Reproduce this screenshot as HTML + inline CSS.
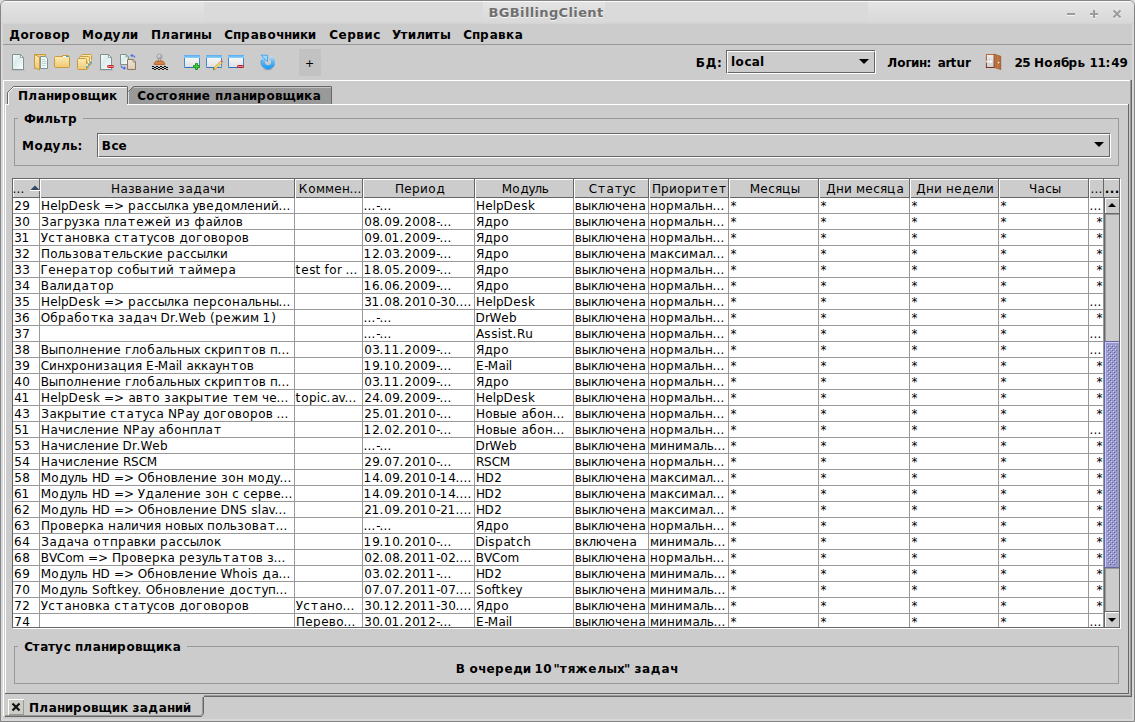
<!DOCTYPE html>
<html><head><meta charset="utf-8"><title>BGBillingClient</title>
<style>
html,body{margin:0;padding:0}
body{width:1135px;height:722px;background:#ccc;position:relative;overflow:hidden;
 font-family:"DejaVu Sans","Liberation Sans",sans-serif;font-size:12px;color:#000}
div,span,svg{position:absolute;box-sizing:border-box}
.t{line-height:16px;white-space:pre;font-weight:normal}
.b{font-weight:bold}
#tx text{font-size:12px;fill:#000;white-space:pre}
#tx{pointer-events:none}
.l{background:#999}.d{background:#666}.w{background:#fff}
/* window frame */
#win{left:0;top:0;width:1135px;height:722px;border:1px solid #858585;border-radius:6px 6px 0 0;box-shadow:inset 0 0 0 2px #d8d8d8}
#titlebar{left:1px;top:1px;width:1133px;height:23px;border-radius:5px 5px 0 0;overflow:hidden;background:linear-gradient(#fbfbfb 0,#fbfbfb 1px,#dadada 1px,#dadada 20px,#d7d7d7 21px,#d2d2d2 23px)}
#titlebar i{position:absolute;top:1px;height:22px;background:linear-gradient(#e4e4e4 0,#dcdcdc 14px,#d9d9d9 20px,#d3d3d3 22px)}
#cornerL,#cornerR{top:0;width:5px;height:5px;background:#dcdcdc}
/* combos */
.cd{border:1px solid #666}.cw{border:1px solid #fff}.cp{width:1px;height:1px;background:#ccc}
/* etched */
.et{border:1px solid #999}
.gap{background:#ccc;height:3px}
/* table */
#tbl{left:13px;top:198px;width:1091px;height:429px;background:#fff;
 background-image:repeating-linear-gradient(to bottom,transparent 0,transparent 15px,#999 15px,#999 16px)}
.gv{top:198px;width:1px;height:429px;background:#999}
#hdr{left:13px;top:179px;width:1106px;height:19px;background:#ccc;border-top:1px solid #fff;border-bottom:1px solid #666}
.hv{top:179px;width:2px;height:19px;background:linear-gradient(to right,#666 0,#666 1px,#fff 1px,#fff 2px)}
</style></head><body>
<div id="cornerL" style="left:0"></div><div id="cornerR" style="left:1130px"></div><div id="win"></div>
<div id="titlebar"><i style="left:0;width:203px"></i><i style="left:482px;width:122px"></i><i style="left:867px;width:266px"></i></div>
<!-- window buttons -->
<svg style="left:1060px;top:6px" width="70" height="16" viewBox="0 0 70 16" shape-rendering="crispEdges">
<g fill="#f2f2f2"><rect x="7" y="8" width="8" height="2"/><rect x="30" y="8" width="8" height="2"/><rect x="33" y="5" width="2" height="8"/></g>
<g fill="#9c9c9c"><rect x="7" y="7" width="8" height="2"/><rect x="30" y="7" width="8" height="2"/><rect x="33" y="4" width="2" height="8"/></g>
<g shape-rendering="auto" stroke-width="2" fill="none"><path d="M53.5 5.5l7 7M60.5 5.5l-7 7" stroke="#f2f2f2"/><path d="M53.5 4.5l7 7M60.5 4.5l-7 7" stroke="#9c9c9c"/></g>
</svg>
<!-- menu bar line -->
<div class="l" style="left:3px;top:44px;width:1129px;height:1px"></div>
<svg style="left:8px;top:50px" width="272" height="24" viewBox="8 50 272 24">
<defs>
<linearGradient id="gd" x1="0" y1="0" x2="1" y2="1"><stop offset="0" stop-color="#fff"/><stop offset=".4" stop-color="#dcebeb"/><stop offset="1" stop-color="#fff"/></linearGradient>
<linearGradient id="gf" x1="0" y1="0" x2="0" y2="1"><stop offset="0" stop-color="#fcebb6"/><stop offset="1" stop-color="#edc873"/></linearGradient>
<linearGradient id="gw" x1="0" y1="0" x2="0" y2="1"><stop offset="0" stop-color="#fff"/><stop offset="1" stop-color="#dedede"/></linearGradient>
<linearGradient id="gb" x1="0" y1="0" x2="0" y2="1"><stop offset="0" stop-color="#55aaf1"/><stop offset="1" stop-color="#8fd2fb"/></linearGradient>
<linearGradient id="gr" x1="0" y1="0" x2="0" y2="1"><stop offset="0" stop-color="#cfe6f8"/><stop offset=".45" stop-color="#62b6f3"/><stop offset="1" stop-color="#149af2"/></linearGradient>
<linearGradient id="gk" x1="0" y1="0" x2="1" y2="1"><stop offset="0" stop-color="#fff"/><stop offset="1" stop-color="#8a8a8a"/></linearGradient>
<linearGradient id="gbe" x1="0" y1="0" x2="0" y2="1"><stop offset="0" stop-color="#efe6d8"/><stop offset="1" stop-color="#dccbb4"/></linearGradient>
</defs>
<!-- 1 new doc -->
<rect x="11" y="69.6" width="14" height="1" fill="#000" opacity=".12"/>
<path d="M12.5 54.5H20.5L23.5 57.5V69.5H12.5z" fill="url(#gd)" stroke="#7f9292"/>
<path d="M20.5 54.5V57.5H23.5z" fill="#fff" stroke="#7f9292" stroke-width=".8"/>
<!-- 2 open folder w doc -->
<rect x="33" y="68.2" width="3" height="1" fill="#000" opacity=".12"/>
<path d="M34.5 54.5H45.5V67.5H34.5z" fill="#f2d387" stroke="#c9983a"/>
<path d="M40.5 56.5H45.5L47.5 58.5V68.5H40.5z" fill="#eef6f6" stroke="#7f9292"/>
<path d="M42 59.5h3M42 61.5h4.5M42 63.5h4.5M42 65.5h3" stroke="#c3d0d0" stroke-width="1"/>
<path d="M34.5 54.5L39.5 57V70L34.5 67.5z" fill="url(#gf)" stroke="#c9983a" stroke-linejoin="round"/>
<!-- 3 folder -->
<path d="M61.5 57L62.5 55.5H68.5L69.5 57" fill="#f3d68c" stroke="#c89b3e"/>
<rect x="54.5" y="56.5" width="15" height="11" rx="1" fill="url(#gf)" stroke="#c89b3e"/>
<rect x="63" y="56" width="3" height="1" fill="#fff"/><rect x="66" y="56" width="2.5" height="1" fill="#1ea6f2"/>
<!-- 4 folder stack -->
<rect x="81.5" y="54.5" width="10" height="10" rx="1" fill="url(#gf)" stroke="#c89b3e"/>
<rect x="79.5" y="56.5" width="10" height="10" rx="1" fill="url(#gf)" stroke="#c89b3e"/>
<rect x="77.5" y="58.5" width="9" height="11" rx="1" fill="url(#gf)" stroke="#c89b3e"/>
<path d="M86.5 63.5l1.5-1.500V69l-1.500 .5z" fill="#f0cf7c" stroke="#c89b3e" stroke-width=".8"/>
<g><rect x="90" y="59.500" width="1.200" height="2" fill="#fff"/><rect x="90" y="61.500" width="1.200" height="2" fill="#1ea6f2"/>
<rect x="88.200" y="61.500" width="1.200" height="2" fill="#fff"/><rect x="88.200" y="63.500" width="1.200" height="2" fill="#1ea6f2"/>
<rect x="86.300" y="64" width="1.200" height="2" fill="#fff"/><rect x="86.300" y="66" width="1.200" height="2" fill="#1ea6f2"/></g>
<!-- 5 doc minus -->
<rect x="99" y="69.600" width="14" height="1" fill="#000" opacity=".12"/>
<path d="M100.500 54.500H108.500L111.500 57.500V69.500H100.500z" fill="url(#gd)" stroke="#7f9292"/>
<path d="M108.500 54.500V57.500H111.500z" fill="#fff" stroke="#7f9292" stroke-width=".8"/>
<rect x="107.500" y="65.500" width="6" height="2" rx=".8" fill="#f08a8a" stroke="#c41a26"/>
<!-- 6 two docs arrows -->
<path d="M120.500 54.500H126L128.500 57V64.500H120.500z" fill="url(#gd)" stroke="#7f9292"/>
<path d="M126 54.500V57H128.500z" fill="#fff" stroke="#7f9292" stroke-width=".8"/>
<path d="M127.500 59.500H133L135.500 62V69.500H127.500z" fill="url(#gbe)" stroke="#8d7761"/>
<path d="M133 59.500V62H135.500z" fill="#fff" stroke="#8d7761" stroke-width=".8"/>
<path d="M135 57.500C134.500 55.800 133 55.300 131 55.600" fill="none" stroke="#4a70ea" stroke-width="1.100"/><path d="M132.300 53.800L130.200 55.700L132.600 57.300z" fill="#3d66e8"/>
<path d="M121 65.500C121.300 67.500 122.800 68.300 124.500 68.200" fill="none" stroke="#4a70ea" stroke-width="1.100"/><path d="M123.800 66.300L126 68.200L123.700 70z" fill="#3d66e8"/>
<!-- stamp -->
<circle cx="159.500" cy="56.500" r="2.500" fill="url(#gk)" stroke="#8e8e8e" stroke-width=".8"/>
<rect x="158.500" y="58.500" width="2" height="4" fill="#c9c9c9" stroke="#909090" stroke-width=".6"/>
<path d="M154.300 64.600V63.200L156.300 61H162.700L164.700 63.200V64.600z" fill="#d58449" stroke="#ad5e2a" stroke-width=".9"/>
<path d="M152 66.500h16" stroke="#000" stroke-dasharray="2 2"/><path d="M152 67.500h16" stroke="#000" stroke-dasharray="2 2" stroke-dashoffset="2"/>
<path d="M152 68.500h16" stroke="#000" stroke-dasharray="2 2"/><path d="M152 69.500h16" stroke="#000" stroke-dasharray="2 2" stroke-dashoffset="2" opacity=".85"/>
<!-- window add -->
<g><rect x="184.500" y="55.500" width="15" height="12" rx="1" fill="url(#gw)" stroke="#3f88d8"/><path d="M184.500 67.500h15" stroke="#2f72bd"/><path d="M184 58V56a1 1 0 0 1 1-1h14a1 1 0 0 1 1 1v2z" fill="url(#gb)"/></g>
<path d="M195.500 63.500h2v2h2v2h-2v2h-2v-2h-2v-2h2z" fill="#3fcf3f" stroke="#1d8e1d" stroke-width=".9"/>
<!-- window edit -->
<g transform="translate(22 0)"><rect x="184.500" y="55.500" width="15" height="12" rx="1" fill="url(#gw)" stroke="#3f88d8"/><path d="M184.500 67.500h15" stroke="#2f72bd"/><path d="M184 58V56a1 1 0 0 1 1-1h14a1 1 0 0 1 1 1v2z" fill="url(#gb)"/></g>
<path d="M213.300 69.600L214.100 67.500L220.500 61.200L222 62.700L215.600 69z" fill="#f4dc58" stroke="#9b8420" stroke-width=".5"/>
<path d="M220.500 61.200L221.500 60.200L223 61.700L222 62.700z" fill="#ee4b5a"/><path d="M213.300 69.600L213.700 68.300L214.700 69.200z" fill="#000"/>
<path d="M219.800 61.900l1.500 1.500" stroke="#f2f2f2" stroke-width=".8"/>
<!-- window del -->
<g transform="translate(44 0)"><rect x="184.500" y="55.500" width="15" height="12" rx="1" fill="url(#gw)" stroke="#3f88d8"/><path d="M184.500 67.500h15" stroke="#2f72bd"/><path d="M184 58V56a1 1 0 0 1 1-1h14a1 1 0 0 1 1 1v2z" fill="url(#gb)"/></g>
<rect x="237.500" y="65.500" width="6" height="2" rx=".8" fill="#f08a8a" stroke="#b01822"/>
<!-- refresh -->
<ellipse cx="268" cy="69.500" rx="5" ry=".7" fill="#000" opacity=".12"/>
<path d="M270.390 55.420A7 7 0 1 1 263.990 56.270L266.220 59.460A3.100 3.100 0 1 0 269.060 59.090z" fill="url(#gr)"/>
<path d="M261.300 60A7 7 0 0 0 274.600 64.500" fill="none" stroke="#1f80da" stroke-width=".7" opacity=".8"/>
<path d="M261.100 55.100L267.700 55.300L267.500 61.700z" fill="#9ad8fe" stroke="#2f92e8" stroke-width=".7" stroke-linejoin="round"/>
</svg>
<svg style="left:984px;top:52px" width="20" height="20" viewBox="984 52 20 20">
<defs><linearGradient id="dg" x1="0" y1="0" x2="0" y2="1"><stop offset="0" stop-color="#bf6a30"/><stop offset="1" stop-color="#7c2f1e"/></linearGradient>
<linearGradient id="dd" x1="0" y1="0" x2="1" y2="0"><stop offset="0" stop-color="#b9703a"/><stop offset=".6" stop-color="#c98550"/><stop offset="1" stop-color="#a65c2c"/></linearGradient>
<linearGradient id="di" x1="0" y1="0" x2="0" y2="1"><stop offset="0" stop-color="#e9eef2"/><stop offset="1" stop-color="#d2d2d2"/></linearGradient></defs>
<rect x="986.4" y="54.500" width="7.700" height="13" fill="url(#di)" stroke="url(#dg)" stroke-width="1"/>
<path d="M994.300 54L1000.800 56.300V69.600L994.300 67.600z" fill="url(#dd)" stroke="#9a4f25" stroke-width=".6"/>
<path d="M996.300 55.500V68M998.300 56.200V68.600" stroke="#9c5628" stroke-width=".5" fill="none"/>
<circle cx="998.600" cy="62.600" r=".8" fill="#fff"/>
<path d="M986.300 60.600H990V58.600L993 61.600L990 64.600V62.600H986.300z" fill="#fff" stroke="#b9b9b9" stroke-width=".5"/>
</svg>
<!-- toolbar right -->
<div style="left:299px;top:49px;width:22px;height:27px;background:#c2c2c2"></div>
<span class="t" style="left:304.9px;top:56px;font-size:11px">+</span>
<div class="cd" style="left:726px;top:50px;width:149px;height:23px"></div><div class="cw" style="left:727px;top:51px;width:149px;height:23px"></div><div class="cp" style="left:727px;top:72px"></div><div class="cp" style="left:874px;top:51px"></div>
<svg style="left:859px;top:59px" width="10" height="5" shape-rendering="crispEdges"><path d="M0 0h10L5 5z" fill="#000" shape-rendering="auto"/></svg>
<!-- outer tabbed pane (bottom tabs) -->
<div class="w" style="left:3px;top:80px;width:1127px;height:1px"></div>
<div class="w" style="left:3px;top:80px;width:1px;height:636px"></div>
<div class="l" style="left:1130px;top:80px;width:1px;height:616px"></div>
<div class="d" style="left:1131px;top:80px;width:1px;height:617px"></div>
<div class="l" style="left:204px;top:695px;width:927px;height:1px"></div>
<div class="d" style="left:204px;top:696px;width:928px;height:1px"></div>
<!-- inner tabbed pane -->
<div class="w" style="left:5px;top:104px;width:4px;height:1px"></div>
<div class="w" style="left:127px;top:104px;width:1001px;height:1px"></div>
<div class="w" style="left:5px;top:104px;width:1px;height:589px"></div>
<div class="d" style="left:1128px;top:104px;width:1px;height:590px"></div>
<div class="d" style="left:5px;top:693px;width:1124px;height:1px"></div>
<svg style="left:0;top:84px" width="340" height="22" viewBox="0 84 340 22" shape-rendering="crispEdges">
<path d="M128.5 92V104H331.5V86.5H133.5z" fill="#999" shape-rendering="auto"/>
<path d="M134 87.5H331" stroke="#c6c6c6" fill="none"/>
<path d="M128.5 92V104" stroke="#dcdcdc" fill="none"/>
<path d="M128.5 91.5L133.5 86.5H331.5V104" stroke="#666" fill="none" shape-rendering="auto"/>
<path d="M8.5 104.5V92.5L13.5 87.5H127" stroke="#fff" fill="none" shape-rendering="auto"/>
<path d="M7.5 104V92.5L13.5 86.5H127.5V104" stroke="#666" fill="none" shape-rendering="auto"/>
</svg>
<!-- filter -->
<div class="et" style="left:14px;top:118px;width:1105px;height:48px"></div>
<div class="gap" style="left:18px;top:117px;width:65px"></div>
<div class="cd" style="left:97px;top:133px;width:1013px;height:24px"></div><div class="cw" style="left:98px;top:134px;width:1013px;height:24px"></div><div class="cp" style="left:98px;top:156px"></div><div class="cp" style="left:1109px;top:134px"></div>
<svg style="left:1094px;top:142px" width="10" height="5"><path d="M0 0h10L5 5z" fill="#000"/></svg>
<!-- table -->
<div style="left:12px;top:178px;width:1108px;height:450px;border:1px solid #666;box-shadow:1px 1px 0 #fff"></div>
<div id="tbl"></div>
<div id="hdr"></div>
<div class="gv" style="left:39px"></div>
<div class="hv" style="left:39px;"></div>
<div class="gv" style="left:294px"></div>
<div class="hv" style="left:294px;"></div>
<div class="gv" style="left:362px"></div>
<div class="hv" style="left:362px;"></div>
<div class="gv" style="left:474px"></div>
<div class="hv" style="left:474px;"></div>
<div class="gv" style="left:573px"></div>
<div class="hv" style="left:573px;"></div>
<div class="gv" style="left:648px"></div>
<div class="hv" style="left:648px;"></div>
<div class="gv" style="left:728px"></div>
<div class="hv" style="left:728px;"></div>
<div class="gv" style="left:818px"></div>
<div class="hv" style="left:818px;"></div>
<div class="gv" style="left:909px"></div>
<div class="hv" style="left:909px;"></div>
<div class="gv" style="left:998px"></div>
<div class="hv" style="left:998px;"></div>
<div class="gv" style="left:1088px"></div>
<div class="hv" style="left:1088px;"></div>
<div class="gv" style="left:1103px"></div>
<div class="hv" style="left:1103px;width:1px"></div>
<div class="w" style="left:13px;top:179px;width:1px;height:18px"></div>
<svg style="left:30px;top:185px" width="10" height="7" shape-rendering="crispEdges"><rect x="0" y="5" width="10" height="1" fill="#fff"/><path d="M5 0.5L9.5 5H0.5z" fill="#2e4a62" shape-rendering="auto"/></svg>
<div style="left:1104px;top:198px;width:15px;height:429px;background:#ccc"></div>
<div class="d" style="left:1104px;top:198px;width:1px;height:429px"></div>
<div class="l" style="left:1105px;top:214px;width:1px;height:397px"></div>
<div class="l" style="left:1105px;top:214px;width:14px;height:1px"></div>
<div class="w" style="left:1105px;top:198px;width:14px;height:1px"></div>
<div class="w" style="left:1105px;top:198px;width:1px;height:15px"></div>
<div class="d" style="left:1105px;top:213px;width:14px;height:1px"></div>
<svg style="left:1108px;top:203px" width="8" height="4"><path d="M0 4h8L4 0z" fill="#000"/></svg>
<div class="d" style="left:1105px;top:611px;width:14px;height:1px"></div>
<div class="w" style="left:1105px;top:612px;width:14px;height:1px"></div>
<div class="w" style="left:1105px;top:612px;width:1px;height:15px"></div>
<svg style="left:1108px;top:618px" width="8" height="4"><path d="M0 0h8L4 4z" fill="#000"/></svg>
<svg style="left:1104px;top:341px" width="15" height="228" shape-rendering="crispEdges">
<defs><pattern id="bp" x="3" y="4" width="4" height="4" patternUnits="userSpaceOnUse">
<rect x="0" y="0" width="1" height="1" fill="#ccf"/><rect x="2" y="2" width="1" height="1" fill="#ccf"/>
<rect x="1" y="1" width="1" height="1" fill="#669"/><rect x="3" y="3" width="1" height="1" fill="#669"/></pattern></defs>
<rect x="0" y="0" width="15" height="227" fill="#99c"/>
<rect x="0" y="0" width="15" height="1" fill="#669"/><rect x="0" y="0" width="1" height="227" fill="#669"/>
<rect x="0" y="226" width="15" height="1" fill="#669"/>
<rect x="1" y="1" width="14" height="1" fill="#ccf"/><rect x="1" y="1" width="1" height="225" fill="#ccf"/>
<rect x="3" y="4" width="10" height="220" fill="url(#bp)"/>
<rect x="1" y="227" width="14" height="1" fill="#999"/>
</svg>
<!-- status -->
<div class="et" style="left:14px;top:646px;width:1105px;height:38px"></div>
<div class="gap" style="left:18px;top:645px;width:169px"></div>
<svg style="left:0;top:690px" width="215" height="30" viewBox="0 690 215 30" shape-rendering="crispEdges">
<path d="M203.5 697V713.5L201.5 716.5H5" stroke="#666" fill="none" shape-rendering="auto"/>
<path d="M202.5 697V713L201 715.5H5" stroke="#999" fill="none" shape-rendering="auto"/>
<rect x="8" y="699" width="16" height="16" fill="#fff"/><rect x="9" y="700" width="15" height="15" fill="#9a9a94"/><rect x="9" y="700" width="14" height="14" fill="#cdcdc8"/>
<path d="M12.5 703.5l7 7M19.5 703.5l-7 7" stroke="#111" stroke-width="2.2" fill="none" shape-rendering="auto"/>
</svg>
<svg id="tx" style="left:0;top:0" width="1135" height="722" viewBox="0 0 1135 722" xml:space="preserve">
<text class="b" x="9.2 20.4 29 35.4 44 52.4 61" y="39">Договор</text>
<text class="b" x="82 94.4 103.2 112.6 121.3 129.8" y="39">Модули</text>
<text class="b" x="151 161.3 170.7 179 184.8 192.9 201.1" y="39">Плагины</text>
<text class="b" x="224.2 232.9 241 250.7 259 267.4 276.2 283.9 291.8 300 307.8" y="39">Справочники</text>
<text class="b" x="329.2 338.6 347.2 356.3 364.3 373.2" y="39">Сервис</text>
<text class="b" x="391.9 400.5 407.8 416.3 424.8 432.5 440.1" y="39">Утилиты</text>
<text class="b" x="463.2 471.9 480 489.7 498 506 514.7" y="39">Справка</text>
<text class="b" x="695.8 705.8 716.9" y="67">БД:</text>
<text class="b" x="730.9 735.4 744.6 751.7 759.9" y="66">local</text>
<text class="b" x="887.3 897.2 905.6 911.1 919 926.5 931.7" y="67">Логин: </text>
<text class="b" x="937.7 945.5 950.6 956.6 964.9" y="67">artur</text>
<text class="b" x="1014.4 1022.3 1030" y="67">25 </text>
<text class="b" x="1034 1044.3 1053.2 1061 1068.5 1077.4 1085.3" y="67">Ноябрь </text>
<text class="b" x="1089.6 1097.6 1105.6 1111.3 1119.4" y="67">11:49</text>
<text class="b" x="18 28.3 37.7 45.9 53.8 62 71.4 80 87.6 100.8 109" y="100">Планировщик</text>
<text class="b" x="137.2 146.3 155.4 161.3 169 178 185.3 193.2 201.8 210.2" y="100">Состояние </text>
<text class="b" x="214.9 223.3 232.7 240.9 248.8 257 266.4 275 282.6 295.8 304 312.7" y="100">планировщика</text>
<text class="b" x="24.1 35.8 44.3 53 60.5 68" y="123">Фильтр</text>
<text class="b" x="22 34.4 43.2 52.6 61.3 70 77.6" y="150">Модуль:</text>
<text class="b" x="101.8 111.6 118.5" y="150">Все</text>
<text class="b" x="24.2 32.4 40.3 48 55 63.8 70" y="651">Статус </text>
<text class="b" x="74.9 83.3 92.7 100.9 108.8 117 126.4 135 142.6 155.8 164 172.7" y="651">планировщика</text>
<text class="b" x="455.8 465" y="673">В </text>
<text class="b" x="469.4 478.2 486.5 495 504.5 513.2 522.8 531" y="673">очереди </text>
<text class="b" x="534.6 543.3 551" y="673">10 </text>
<text class="b" x="553.4 559.7 567.8 575.6 588.2 597.2 606.2 616.9 623.9 630.7" y="673">"тяжелых" </text>
<text class="b" x="634.6 641.9 650.7 661.4 670.2" y="673">задач</text>
<text class="b" x="29 39.3 48.7 56.9 64.8 73 82.4 91 98.6 111.8 120 128" y="712">Планировщик </text>
<text class="b" x="132.6 139.7 148.2 158.7 166.9 174.8 182.8" y="712">заданий</text>
<text class="b" x="1104.7 1109.7 1114.7" y="193">...</text>
<text x="12.6 16.6 20.6" y="193">...</text>
<text x="111 120.5 128.3 134.8 142.5 150.1 158.1 166.3 174 178.3 185.5 193.4 202.5 210.1 217.1" y="193">Название задачи</text>
<text x="298.8 308.3 316 325 334.3 342.1 349.6 353.6 357.6" y="193">Коммен...</text>
<text x="395 404.3 412 420.1 428.3 436.4" y="193">Период</text>
<text x="501.8 512.3 520.4 528.4 534.4 541.8" y="193">Модуль</text>
<text x="588.8 598 606.5 615 622.4 629.2" y="193">Статус</text>
<text x="652 661 669.1 677.3 685 693.1 702 710.3 719" y="193">Приоритет</text>
<text x="749.8 760.3 768.2 775.1 782.1 790.8" y="193">Месяцы</text>
<text x="826.3 836.1 844.1 852 856 865.3 873.2 880.1 887.1 896.5" y="193">Дни месяца</text>
<text x="916.3 926.1 934.1 942 946.1 954.3 962.4 971.3 978.4 986.1" y="193">Дни недели</text>
<text x="1029 1037.5 1045.2 1051.8" y="193">Часы</text>
<text x="1090.6 1094.6 1098.6" y="193">...</text>
<text x="14.3 22.2" y="210">29</text>
<text x="41 50.3 57.8 61 68.6 78.3 86.3 93 100 104 114 124 128 136.5 144.2 151.2 157.8 166.4 174 181.5 189 192.4 198.8 206.3 214.4 223.3 231 239.4 247.3 255.1 263.1 271.1 278.6 282.6 286.6" y="210">HelpDesk =&gt; рассылка уведомлений...</text>
<text x="363.6 367.6 371.6 376.3 379.6 383.6 387.6" y="210">...-...</text>
<text x="476 485.3 492.8 496 503.6 513.3 521.3 528" y="210">HelpDesk</text>
<text x="574.8 581.8 591 597.4 604.7 615.1 622.3 630.1 638.5" y="210">выключена</text>
<text x="650.1 658.3 666 674 683.5 690.4 697.8 705.1 712.6 716.6 720.6" y="210">нормальн...</text>
<text x="730.5" y="210">*</text>
<text x="820.5" y="210">*</text>
<text x="911.5" y="210">*</text>
<text x="1000.5" y="210">*</text>
<text x="1089.6 1093.6 1097.6" y="210">...</text>
<text x="14.2 22.2" y="226">30</text>
<text x="41.2 49.5 57.1 64 71.4 78.3 85 92.5 100 104.1 111.4 119.5 128 136.3 144.1 155.3 163.1 171 175.1 183.3 190 194.4 205.5 213.1 220.4 228.3 235.8" y="226">Загрузка платежей из файлов</text>
<text x="364.2 372.2 379.6 384.2 392.2 399.6 404.3 412.2 420.2 428.2 436.3 439.6 443.6 447.6" y="226">08.09.2008-...</text>
<text x="476 484.4 493 501.3" y="226">Ядро</text>
<text x="574.8 581.8 591 597.4 604.7 615.1 622.3 630.1 638.5" y="226">выключена</text>
<text x="650.1 658.3 666 674 683.5 690.4 697.8 705.1 712.6 716.6 720.6" y="226">нормальн...</text>
<text x="730.5" y="226">*</text>
<text x="820.5" y="226">*</text>
<text x="911.5" y="226">*</text>
<text x="1000.5" y="226">*</text>
<text x="1096.5" y="226">*</text>
<text x="14.2 21.6" y="242">31</text>
<text x="40.8 48.2 56 64.5 72.1 80.3 87.8 95 102.5 110 114.2 122 130.5 139 146.4 153.2 160.3 167.8 175 179.4 188.3 196.1 203.3 210.8 218.3 226 234.3 241.8" y="242">Установка статусов договоров</text>
<text x="364.2 372.2 379.6 384.2 391.6 399.6 404.3 412.2 420.2 428.2 436.3 439.6 443.6 447.6" y="242">09.01.2009-...</text>
<text x="476 484.4 493 501.3" y="242">Ядро</text>
<text x="574.8 581.8 591 597.4 604.7 615.1 622.3 630.1 638.5" y="242">выключена</text>
<text x="650.1 658.3 666 674 683.5 690.4 697.8 705.1 712.6 716.6 720.6" y="242">нормальн...</text>
<text x="730.5" y="242">*</text>
<text x="820.5" y="242">*</text>
<text x="911.5" y="242">*</text>
<text x="1000.5" y="242">*</text>
<text x="1096.5" y="242">*</text>
<text x="14.2 22.3" y="258">32</text>
<text x="41 50.3 57.4 64.8 72.3 79.3 86.8 94.5 103 111.3 118.4 125.8 133.2 140 147.1 155.3 163 167 175.5 183.2 190.2 196.8 205.4 213 220.1" y="258">Пользовательские рассылки</text>
<text x="363.6 372.3 379.6 384.2 392.2 399.6 404.3 412.2 420.2 428.2 436.3 439.6 443.6 447.6" y="258">12.03.2009-...</text>
<text x="476 484.4 493 501.3" y="258">Ядро</text>
<text x="574.8 581.8 591 597.4 604.7 615.1 622.3 630.1 638.5" y="258">выключена</text>
<text x="650 659.5 667 674.2 681.1 689 698.5 705.4 712.6 716.6 720.6" y="258">максимал...</text>
<text x="730.5" y="258">*</text>
<text x="820.5" y="258">*</text>
<text x="911.5" y="258">*</text>
<text x="1000.5" y="258">*</text>
<text x="1096.5" y="258">*</text>
<text x="14.2 22.2" y="274">33</text>
<text x="40.6 48.3 56.1 64.3 72 80.5 89 97.3 105 113 117.2 124.3 132.3 139.8 150 158.1 166.1 174 179 187.5 195.1 203 212.3 220 228.5" y="274">Генератор событий таймера</text>
<text x="295.6 301.3 309.3 315.6 321 324.6 329.3 337 342 345.6 349.6 353.6" y="274">test for ...</text>
<text x="363.6 372.2 379.6 384.2 392.2 399.6 404.3 412.2 420.2 428.2 436.3 439.6 443.6 447.6" y="274">18.05.2009-...</text>
<text x="476 484.4 493 501.3" y="274">Ядро</text>
<text x="574.8 581.8 591 597.4 604.7 615.1 622.3 630.1 638.5" y="274">выключена</text>
<text x="650.1 658.3 666 674 683.5 690.4 697.8 705.1 712.6 716.6 720.6" y="274">нормальн...</text>
<text x="730.5" y="274">*</text>
<text x="820.5" y="274">*</text>
<text x="911.5" y="274">*</text>
<text x="1000.5" y="274">*</text>
<text x="1096.5" y="274">*</text>
<text x="14.2 22.2" y="290">34</text>
<text x="40.7 49.5 56.4 64.1 72.4 81.5 90 98.3 106" y="290">Валидатор</text>
<text x="363.6 372.1 379.6 384.2 392.1 399.6 404.3 412.2 420.2 428.2 436.3 439.6 443.6 447.6" y="290">16.06.2009-...</text>
<text x="476 484.4 493 501.3" y="290">Ядро</text>
<text x="574.8 581.8 591 597.4 604.7 615.1 622.3 630.1 638.5" y="290">выключена</text>
<text x="650.1 658.3 666 674 683.5 690.4 697.8 705.1 712.6 716.6 720.6" y="290">нормальн...</text>
<text x="730.5" y="290">*</text>
<text x="820.5" y="290">*</text>
<text x="911.5" y="290">*</text>
<text x="1000.5" y="290">*</text>
<text x="1096.5" y="290">*</text>
<text x="14.2 22.2" y="306">35</text>
<text x="41 50.3 57.8 61 68.6 78.3 86.3 93 100 104 114 124 128 136.5 144.2 151.2 157.8 166.4 174 181.5 189 193.1 201.3 209 217.2 224.3 232.1 240.5 247.4 254.8 262.1 269.8 278.6 282.6 286.6" y="306">HelpDesk =&gt; рассылка персональны...</text>
<text x="364.2 371.6 379.6 384.2 392.2 399.6 404.3 412.2 419.6 428.2 436.3 440.2 448.2 455.6 459.6 463.6 467.6" y="306">31.08.2010-30....</text>
<text x="476 485.3 492.8 496 503.6 513.3 521.3 528" y="306">HelpDesk</text>
<text x="574.8 581.8 591 597.4 604.7 615.1 622.3 630.1 638.5" y="306">выключена</text>
<text x="650.1 658.3 666 674 683.5 690.4 697.8 705.1 712.6 716.6 720.6" y="306">нормальн...</text>
<text x="730.5" y="306">*</text>
<text x="820.5" y="306">*</text>
<text x="911.5" y="306">*</text>
<text x="1000.5" y="306">*</text>
<text x="1089.6 1093.6 1097.6" y="306">...</text>
<text x="14.2 22.1" y="322">36</text>
<text x="40.8 50.3 58 66.5 74.3 82.3 91 99 106.5 114 118.3 125.5 133.4 142.5 150.1 157 160.6 170 174.6 178.6 190.3 198 206 210.1 215 223.3 231.1 242.1 250 259 262.6 271.2" y="322">Обработка задач Dr.Web (режим 1)</text>
<text x="363.6 367.6 371.6 376.3 379.6 383.6 387.6" y="322">...-...</text>
<text x="475.6 485 489.6 501.3 509" y="322">DrWeb</text>
<text x="574.8 581.8 591 597.4 604.7 615.1 622.3 630.1 638.5" y="322">выключена</text>
<text x="650.1 658.3 666 674 683.5 690.4 697.8 705.1 712.6 716.6 720.6" y="322">нормальн...</text>
<text x="730.5" y="322">*</text>
<text x="820.5" y="322">*</text>
<text x="911.5" y="322">*</text>
<text x="1000.5" y="322">*</text>
<text x="1096.5" y="322">*</text>
<text x="14.2 22.2" y="338">37</text>
<text x="363.6 367.6 371.6 376.3 379.6 383.6 387.6" y="338">...-...</text>
<text x="475.9 484.3 491.3 497.8 501.3 507.6 512.6 516.9 525.2" y="338">Assist.Ru</text>
<text x="574.8 581.8 591 597.4 604.7 615.1 622.3 630.1 638.5" y="338">выключена</text>
<text x="650.1 658.3 666 674 683.5 690.4 697.8 705.1 712.6 716.6 720.6" y="338">нормальн...</text>
<text x="730.5" y="338">*</text>
<text x="820.5" y="338">*</text>
<text x="911.5" y="338">*</text>
<text x="1000.5" y="338">*</text>
<text x="1089.6 1093.6 1097.6" y="338">...</text>
<text x="14.2 22.2" y="354">38</text>
<text x="40.7 48.8 58.1 66.3 73.4 81.1 89.3 97.1 105.1 113.3 121 125.1 131.4 139.3 147.3 155.5 162.4 169.8 177.1 184.8 193.5 200 204.2 211 218 226.1 234.1 243 251.3 258.8 266 270.1 277.6 281.6 285.6" y="354">Выполнение глобальных скриптов п...</text>
<text x="364.2 372.2 379.6 383.6 391.6 399.6 404.3 412.2 420.2 428.2 436.3 439.6 443.6 447.6" y="354">03.11.2009-...</text>
<text x="476 484.4 493 501.3" y="354">Ядро</text>
<text x="574.8 581.8 591 597.4 604.7 615.1 622.3 630.1 638.5" y="354">выключена</text>
<text x="650.1 658.3 666 674 683.5 690.4 697.8 705.1 712.6 716.6 720.6" y="354">нормальн...</text>
<text x="730.5" y="354">*</text>
<text x="820.5" y="354">*</text>
<text x="911.5" y="354">*</text>
<text x="1000.5" y="354">*</text>
<text x="1089.6 1093.6 1097.6" y="354">...</text>
<text x="14.2 22.2" y="370">39</text>
<text x="40.8 49.1 57.1 64.5 71 79.3 87.1 95.1 103.3 110.5 118.1 127.1 135.1 142 146 154.3 157.8 168.5 175.8 178.8 182 186.5 194 201 208.5 215.4 222.1 231 239.3 246.8" y="370">Синхронизация E-Mail аккаунтов</text>
<text x="363.6 372.2 379.6 383.6 392.2 399.6 404.3 412.2 420.2 428.2 436.3 439.6 443.6 447.6" y="370">19.10.2009-...</text>
<text x="476 484.3 487.8 498.5 505.8 508.8" y="370">E-Mail</text>
<text x="574.8 581.8 591 597.4 604.7 615.1 622.3 630.1 638.5" y="370">выключена</text>
<text x="650.1 658.3 666 674 683.5 690.4 697.8 705.1 712.6 716.6 720.6" y="370">нормальн...</text>
<text x="730.5" y="370">*</text>
<text x="820.5" y="370">*</text>
<text x="911.5" y="370">*</text>
<text x="1000.5" y="370">*</text>
<text x="1096.5" y="370">*</text>
<text x="14.2 22.2" y="386">40</text>
<text x="40.7 48.8 58.1 66.3 73.4 81.1 89.3 97.1 105.1 113.3 121 125.1 131.4 139.3 147.3 155.5 162.4 169.8 177.1 184.8 193.5 200 204.2 211 218 226.1 234.1 243 251.3 258.8 266 270.1 277.6 281.6 285.6" y="386">Выполнение глобальных скриптов п...</text>
<text x="364.2 372.2 379.6 383.6 391.6 399.6 404.3 412.2 420.2 428.2 436.3 439.6 443.6 447.6" y="386">03.11.2009-...</text>
<text x="476 484.4 493 501.3" y="386">Ядро</text>
<text x="574.8 581.8 591 597.4 604.7 615.1 622.3 630.1 638.5" y="386">выключена</text>
<text x="650.1 658.3 666 674 683.5 690.4 697.8 705.1 712.6 716.6 720.6" y="386">нормальн...</text>
<text x="730.5" y="386">*</text>
<text x="820.5" y="386">*</text>
<text x="911.5" y="386">*</text>
<text x="1000.5" y="386">*</text>
<text x="1096.5" y="386">*</text>
<text x="14.2 21.6" y="402">41</text>
<text x="41 50.3 57.8 61 68.6 78.3 86.3 93 100 104 114 124 128.5 135.8 144 152.3 160 164.3 171.5 179 186 193.8 204 212.1 220.3 228 233 241.3 249 258 262.1 269.3 276.6 280.6 284.6" y="402">HelpDesk =&gt; авто закрытие тем че...</text>
<text x="295.6 301.3 309 316.8 320.2 326.6 331.5 338.4 344.6 348.6 352.6" y="402">topic.av...</text>
<text x="364.3 372.2 379.6 384.2 392.2 399.6 404.3 412.2 420.2 428.2 436.3 439.6 443.6 447.6" y="402">24.09.2009-...</text>
<text x="476 485.3 492.8 496 503.6 513.3 521.3 528" y="402">HelpDesk</text>
<text x="574.8 581.8 591 597.4 604.7 615.1 622.3 630.1 638.5" y="402">выключена</text>
<text x="650.1 658.3 666 674 683.5 690.4 697.8 705.1 712.6 716.6 720.6" y="402">нормальн...</text>
<text x="730.5" y="402">*</text>
<text x="820.5" y="402">*</text>
<text x="911.5" y="402">*</text>
<text x="1000.5" y="402">*</text>
<text x="1096.5" y="402">*</text>
<text x="14.2 22.2" y="418">43</text>
<text x="41.2 49.5 57 64 71.8 82 90.1 98.3 106 110.2 118 126.5 135 142.4 149.2 156.5 164 168 177 185.5 192.4 199 203.4 212.3 220.1 227.3 234.8 242.3 250 258.3 265.8 273 276.6 280.6 284.6" y="418">Закрытие статуса NPay договоров ...</text>
<text x="364.3 372.2 379.6 384.2 391.6 399.6 404.3 412.2 419.6 428.2 436.3 439.6 443.6 447.6" y="418">25.01.2010-...</text>
<text x="476 485.3 492.8 499.8 509.3 517 521.5 529.3 537.3 545.1 552.6 556.6 560.6" y="418">Новые абон...</text>
<text x="574.8 581.8 591 597.4 604.7 615.1 622.3 630.1 638.5" y="418">выключена</text>
<text x="650.1 658.3 666 674 683.5 690.4 697.8 705.1 712.6 716.6 720.6" y="418">нормальн...</text>
<text x="730.5" y="418">*</text>
<text x="820.5" y="418">*</text>
<text x="911.5" y="418">*</text>
<text x="1000.5" y="418">*</text>
<text x="1096.5" y="418">*</text>
<text x="14.2 21.6" y="434">51</text>
<text x="41 50.5 58.1 65.1 73.2 79.4 87.3 95.1 103.1 111.3 119 123 132 140.5 147.4 154 158.5 166.3 174.3 182.1 190.1 197.4 205.5 214" y="434">Начисление NPay абонплат</text>
<text x="363.6 372.3 379.6 384.2 392.3 399.6 404.3 412.2 419.6 428.2 436.3 439.6 443.6 447.6" y="434">12.02.2010-...</text>
<text x="476 485.3 492.8 499.8 509.3 517 521.5 529.3 537.3 545.1 552.6 556.6 560.6" y="434">Новые абон...</text>
<text x="574.8 581.8 591 597.4 604.7 615.1 622.3 630.1 638.5" y="434">выключена</text>
<text x="650.1 658.3 666 674 683.5 690.4 697.8 705.1 712.6 716.6 720.6" y="434">нормальн...</text>
<text x="730.5" y="434">*</text>
<text x="820.5" y="434">*</text>
<text x="911.5" y="434">*</text>
<text x="1000.5" y="434">*</text>
<text x="1089.6 1093.6 1097.6" y="434">...</text>
<text x="14.2 22.2" y="450">53</text>
<text x="41 50.5 58.1 65.1 73.2 79.4 87.3 95.1 103.1 111.3 119 122.6 132 136.6 140.6 152.3 160" y="450">Начисление Dr.Web</text>
<text x="363.6 367.6 371.6 376.3 379.6 383.6 387.6" y="450">...-...</text>
<text x="475.6 485 489.6 501.3 509" y="450">DrWeb</text>
<text x="574.8 581.8 591 597.4 604.7 615.1 622.3 630.1 638.5" y="450">выключена</text>
<text x="650 659.1 667.1 675.1 683 692.5 699.4 706.8 713.6 717.6 721.6" y="450">минималь...</text>
<text x="730.5" y="450">*</text>
<text x="820.5" y="450">*</text>
<text x="911.5" y="450">*</text>
<text x="1000.5" y="450">*</text>
<text x="1096.5" y="450">*</text>
<text x="14.2 22.2" y="466">54</text>
<text x="41 50.5 58.1 65.1 73.2 79.4 87.3 95.1 103.1 111.3 119 122.9 131.1 138.8 146.8" y="466">Начисление RSCM</text>
<text x="364.3 372.2 379.6 384.2 392.2 399.6 404.3 412.2 419.6 428.2 436.3 439.6 443.6 447.6" y="466">29.07.2010-...</text>
<text x="475.9 484.1 491.8 499.8" y="466">RSCM</text>
<text x="574.8 581.8 591 597.4 604.7 615.1 622.3 630.1 638.5" y="466">выключена</text>
<text x="650.1 658.3 666 674 683.5 690.4 697.8 705.1 712.6 716.6 720.6" y="466">нормальн...</text>
<text x="730.5" y="466">*</text>
<text x="820.5" y="466">*</text>
<text x="911.5" y="466">*</text>
<text x="1000.5" y="466">*</text>
<text x="1096.5" y="466">*</text>
<text x="14.2 22.2" y="482">58</text>
<text x="40.8 51.3 59.4 67.4 73.4 80.8 88 92 100.6 110 114 124 134 137.8 147.3 155.1 163.3 170.8 177.4 185.3 193.1 201.1 209.3 217 221.3 228.3 236.1 244 248 257.3 265.4 273.4 279.6 283.6 287.6" y="482">Модуль HD =&gt; Обновление зон моду...</text>
<text x="363.6 372.2 379.6 384.2 392.2 399.6 404.3 412.2 419.6 428.2 436.3 439.6 448.2 455.6 459.6 463.6 467.6" y="482">14.09.2010-14....</text>
<text x="476 484.6 494.3" y="482">HD2</text>
<text x="574.8 581.8 591 597.4 604.7 615.1 622.3 630.1 638.5" y="482">выключена</text>
<text x="650 659.5 667 674.2 681.1 689 698.5 705.4 712.6 716.6 720.6" y="482">максимал...</text>
<text x="730.5" y="482">*</text>
<text x="820.5" y="482">*</text>
<text x="911.5" y="482">*</text>
<text x="1000.5" y="482">*</text>
<text x="1096.5" y="482">*</text>
<text x="14.1 21.6" y="498">61</text>
<text x="40.8 51.3 59.4 67.4 73.4 80.8 88 92 100.6 110 114 124 134 137.8 145.4 154.5 161.4 169.3 177.1 185.1 193.3 201 205.3 212.3 220.1 228 232.2 239 243.2 250.3 258 265.8 273.3 280.6 284.6 288.6" y="498">Модуль HD =&gt; Удаление зон с серве...</text>
<text x="363.6 372.2 379.6 384.2 392.2 399.6 404.3 412.2 419.6 428.2 436.3 439.6 448.2 455.6 459.6 463.6 467.6" y="498">14.09.2010-14....</text>
<text x="476 484.6 494.3" y="498">HD2</text>
<text x="574.8 581.8 591 597.4 604.7 615.1 622.3 630.1 638.5" y="498">выключена</text>
<text x="650 659.5 667 674.2 681.1 689 698.5 705.4 712.6 716.6 720.6" y="498">максимал...</text>
<text x="730.5" y="498">*</text>
<text x="820.5" y="498">*</text>
<text x="911.5" y="498">*</text>
<text x="1000.5" y="498">*</text>
<text x="1096.5" y="498">*</text>
<text x="14.1 22.3" y="514">62</text>
<text x="40.8 51.3 59.4 67.4 73.4 80.8 88 92 100.6 110 114 124 134 137.8 147.3 155.1 163.3 170.8 177.4 185.3 193.1 201.1 209.3 217 220.6 230 239.1 247 251.3 257.8 261.5 268.4 274.6 278.6 282.6" y="514">Модуль HD =&gt; Обновление DNS slav...</text>
<text x="364.3 371.6 379.6 384.2 392.2 399.6 404.3 412.2 419.6 428.2 436.3 440.3 447.6 455.6 459.6 463.6 467.6" y="514">21.09.2010-21....</text>
<text x="476 484.6 494.3" y="514">HD2</text>
<text x="574.8 581.8 591 597.4 604.7 615.1 622.3 630.1 638.5" y="514">выключена</text>
<text x="650 659.5 667 674.2 681.1 689 698.5 705.4 712.6 716.6 720.6" y="514">максимал...</text>
<text x="730.5" y="514">*</text>
<text x="820.5" y="514">*</text>
<text x="911.5" y="514">*</text>
<text x="1000.5" y="514">*</text>
<text x="1096.5" y="514">*</text>
<text x="14.1 22.2" y="530">63</text>
<text x="41 50 58.3 65.8 73.3 81 89 96.5 104 108.1 116.5 123.4 131.1 139.1 146.1 154.1 161 165.1 173.3 180.8 187.8 196.5 203 207.1 215.3 222.4 229.8 237.3 244.3 251.8 259.5 268 275.6 279.6 283.6" y="530">Проверка наличия новых пользоват...</text>
<text x="363.6 367.6 371.6 376.3 379.6 383.6 387.6" y="530">...-...</text>
<text x="476 484.4 493 501.3" y="530">Ядро</text>
<text x="574.8 581.8 591 597.4 604.7 615.1 622.3 630.1 638.5" y="530">выключена</text>
<text x="650.1 658.3 666 674 683.5 690.4 697.8 705.1 712.6 716.6 720.6" y="530">нормальн...</text>
<text x="730.5" y="530">*</text>
<text x="820.5" y="530">*</text>
<text x="911.5" y="530">*</text>
<text x="1000.5" y="530">*</text>
<text x="1096.5" y="530">*</text>
<text x="14.1 22.2" y="546">64</text>
<text x="41.2 49.5 57.4 66.5 74.1 81.5 89 93.3 102 110.1 118 126.5 133.8 141 148.1 156 160 168.5 176.2 183.2 189.8 198.4 206.3 214" y="546">Задача отправки рассылок</text>
<text x="363.6 372.2 379.6 383.6 392.2 399.6 404.3 412.2 419.6 428.2 436.3 439.6 443.6 447.6" y="546">19.10.2010-...</text>
<text x="475.6 484.8 488.3 495 503.5 510.6 516.2 523.2" y="546">Dispatch</text>
<text x="574.8 582 588.4 595.7 606.1 613.3 621.1 629.5" y="546">включена</text>
<text x="650 659.1 667.1 675.1 683 692.5 699.4 706.8 713.6 717.6 721.6" y="546">минималь...</text>
<text x="730.5" y="546">*</text>
<text x="820.5" y="546">*</text>
<text x="911.5" y="546">*</text>
<text x="1000.5" y="546">*</text>
<text x="1096.5" y="546">*</text>
<text x="14.1 22.2" y="562">68</text>
<text x="40.7 48.9 56.8 65.3 72.6 84 88 98 108 112 121 129.3 136.8 144.3 152 160 167.5 175 179 187.3 195.3 201.4 207.4 214.8 223 231.5 240 248.3 255.8 263 267.3 273.6 277.6 281.6" y="562">BVCom =&gt; Проверка результатов з...</text>
<text x="364.2 372.3 379.6 384.2 392.2 399.6 404.3 412.2 419.6 427.6 436.3 440.2 448.3 455.6 459.6 463.6 467.6" y="562">02.08.2011-02....</text>
<text x="475.7 483.9 491.8 500.3 507.6" y="562">BVCom</text>
<text x="574.8 581.8 591 597.4 604.7 615.1 622.3 630.1 638.5" y="562">выключена</text>
<text x="650.1 658.3 666 674 683.5 690.4 697.8 705.1 712.6 716.6 720.6" y="562">нормальн...</text>
<text x="730.5" y="562">*</text>
<text x="820.5" y="562">*</text>
<text x="911.5" y="562">*</text>
<text x="1000.5" y="562">*</text>
<text x="1096.5" y="562">*</text>
<text x="14.1 22.2" y="578">69</text>
<text x="40.8 51.3 59.4 67.4 73.4 80.8 88 92 100.6 110 114 124 134 137.8 147.3 155.1 163.3 170.8 177.4 185.3 193.1 201.1 209.3 217 220.6 232.2 240.3 247.8 251.3 258 262.4 271.5 278.6 282.6 286.6" y="578">Модуль HD =&gt; Обновление Whois да...</text>
<text x="364.2 372.2 379.6 384.2 392.3 399.6 404.3 412.2 419.6 427.6 436.3 439.6 443.6 447.6" y="578">03.02.2011-...</text>
<text x="476 484.6 494.3" y="578">HD2</text>
<text x="574.8 581.8 591 597.4 604.7 615.1 622.3 630.1 638.5" y="578">выключена</text>
<text x="650 659.1 667.1 675.1 683 692.5 699.4 706.8 713.6 717.6 721.6" y="578">минималь...</text>
<text x="730.5" y="578">*</text>
<text x="820.5" y="578">*</text>
<text x="911.5" y="578">*</text>
<text x="1000.5" y="578">*</text>
<text x="1096.5" y="578">*</text>
<text x="14.2 22.2" y="594">70</text>
<text x="40.8 51.3 59.4 67.4 73.4 80.8 88 92.1 100.3 107.6 111.6 117 124.3 131.4 137.6 142 145.8 155.3 163.1 171.3 178.8 185.4 193.3 201.1 209.1 217.3 225 229.4 238.3 246.2 254 261.4 268.1 275.6 279.6 283.6" y="594">Модуль Softkey. Обновление доступ...</text>
<text x="364.2 372.2 379.6 384.2 392.2 399.6 404.3 412.2 419.6 427.6 436.3 440.2 448.2 455.6 459.6 463.6 467.6" y="594">07.07.2011-07....</text>
<text x="476.1 484.3 491.6 495.6 501 508.3 515.4" y="594">Softkey</text>
<text x="574.8 581.8 591 597.4 604.7 615.1 622.3 630.1 638.5" y="594">выключена</text>
<text x="650 659.1 667.1 675.1 683 692.5 699.4 706.8 713.6 717.6 721.6" y="594">минималь...</text>
<text x="730.5" y="594">*</text>
<text x="820.5" y="594">*</text>
<text x="911.5" y="594">*</text>
<text x="1000.5" y="594">*</text>
<text x="1096.5" y="594">*</text>
<text x="14.2 22.3" y="610">72</text>
<text x="40.8 48.2 56 64.5 72.1 80.3 87.8 95 102.5 110 114.2 122 130.5 139 146.4 153.2 160.3 167.8 175 179.4 188.3 196.1 203.3 210.8 218.3 226 234.3 241.8" y="610">Установка статусов договоров</text>
<text x="295.8 303.2 311 319.5 327.1 335.3 342.6 346.6 350.6" y="610">Устано...</text>
<text x="364.2 372.2 379.6 383.6 392.3 399.6 404.3 412.2 419.6 427.6 436.3 440.2 448.2 455.6 459.6 463.6 467.6" y="610">30.12.2011-30....</text>
<text x="476 484.4 493 501.3" y="610">Ядро</text>
<text x="574.8 581.8 591 597.4 604.7 615.1 622.3 630.1 638.5" y="610">выключена</text>
<text x="650 659.1 667.1 675.1 683 692.5 699.4 706.8 713.6 717.6 721.6" y="610">минималь...</text>
<text x="730.5" y="610">*</text>
<text x="820.5" y="610">*</text>
<text x="911.5" y="610">*</text>
<text x="1000.5" y="610">*</text>
<text x="1096.5" y="610">*</text>
<text x="14.2 22.2" y="626">74</text>
<text x="296 305.3 313 321.3 328.8 336.3 343.6 347.6 351.6" y="626">Перево...</text>
<text x="364.2 372.2 379.6 384.2 391.6 399.6 404.3 412.2 419.6 428.3 436.3 439.6 443.6 447.6" y="626">30.01.2012-...</text>
<text x="476 484.3 487.8 498.5 505.8 508.8" y="626">E-Mail</text>
<text x="574.8 581.8 591 597.4 604.7 615.1 622.3 630.1 638.5" y="626">выключена</text>
<text x="650 659.1 667.1 675.1 683 692.5 699.4 706.8 713.6 717.6 721.6" y="626">минималь...</text>
<text x="730.5" y="626">*</text>
<text x="820.5" y="626">*</text>
<text x="911.5" y="626">*</text>
<text x="1000.5" y="626">*</text>
<text x="1089.6 1093.6 1097.6" y="626">...</text>
</svg>
<span class="t b" style="left:488.59px;top:5px;letter-spacing:0.352px;font-size:13px;color:#6f6f6f;text-shadow:0 1px 0 #f4f4f4">BGBillingClient</span>
<div class="d" style="left:12px;top:627px;width:1108px;height:1px"></div><div class="w" style="left:13px;top:628px;width:1108px;height:1px"></div><div style="left:12px;top:629px;width:1109px;height:4px;background:#ccc"></div>
</body></html>
